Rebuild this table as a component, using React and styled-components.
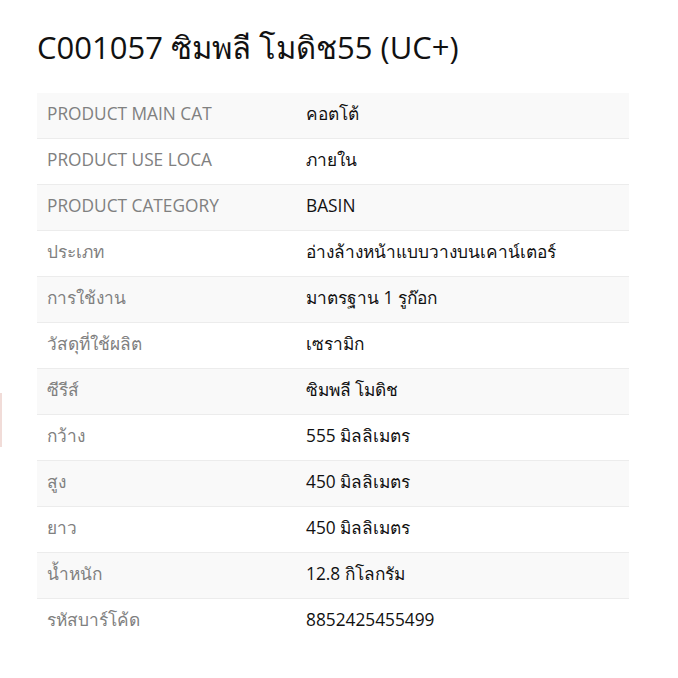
import React from "react";
import styled, { createGlobalStyle } from "styled-components";

const Global = createGlobalStyle`
  html, body { margin: 0; padding: 0; background: #fff; }
  body { font-family: "Open Sans", "Noto Sans", sans-serif; }
`;

const Page = styled.div`
  width: 678px;
  height: 678px;
  box-sizing: border-box;
  padding: 26px 49px 0 37px;
  position: relative;
`;

const Title = styled.h1`
  margin: 0 0 24px;
  font-size: 31px;
  line-height: 43px;
  font-weight: 400;
  color: #111;
  font-family: "Open Sans", "Noto Sans", sans-serif;
`;

const Table = styled.table`
  width: 592px;
  border-collapse: collapse;
  font-size: 17.3px;
`;

const Row = styled.tr`
  background: ${(p) => (p.$shade ? "#f9f9f9" : "#fff")};
  border-top: ${(p) => (p.$first ? "none" : "1px solid #ececec")};
`;

const Label = styled.td`
  width: 239px;
  padding: 9px 10px 13px;
  color: #808080;
  line-height: 23px;
  text-transform: uppercase;
  vertical-align: middle;
`;

const Value = styled.td`
  padding: 9px 10px 13px;
  color: #111;
  line-height: 23px;
  vertical-align: middle;
`;

const EdgeTab = styled.div`
  position: absolute;
  left: 0;
  top: 393px;
  width: 2px;
  height: 54px;
  background: #f1dcd8;
`;

const rows = [
  ["PRODUCT MAIN CAT", "คอตโต้"],
  ["PRODUCT USE LOCA", "ภายใน"],
  ["PRODUCT CATEGORY", "BASIN"],
  ["ประเภท", "อ่างล้างหน้าแบบวางบนเคาน์เตอร์"],
  ["การใช้งาน", "มาตรฐาน 1 รูก๊อก"],
  ["วัสดุที่ใช้ผลิต", "เซรามิก"],
  ["ซีรีส์", "ซิมพลี โมดิช"],
  ["กว้าง", "555 มิลลิเมตร"],
  ["สูง", "450 มิลลิเมตร"],
  ["ยาว", "450 มิลลิเมตร"],
  ["น้ำหนัก", "12.8 กิโลกรัม"],
  ["รหัสบาร์โค้ด", "8852425455499"],
];

export default function App() {
  return (
    <>
      <Global />
      <Page>
        <EdgeTab />
        <Title>C001057 ซิมพลี โมดิช55 (UC+)</Title>
        <Table>
          <tbody>
            {rows.map(([l, v], i) => (
              <Row key={i} $shade={i % 2 === 0} $first={i === 0}>
                <Label>{l}</Label>
                <Value>{v}</Value>
              </Row>
            ))}
          </tbody>
        </Table>
      </Page>
    </>
  );
}
